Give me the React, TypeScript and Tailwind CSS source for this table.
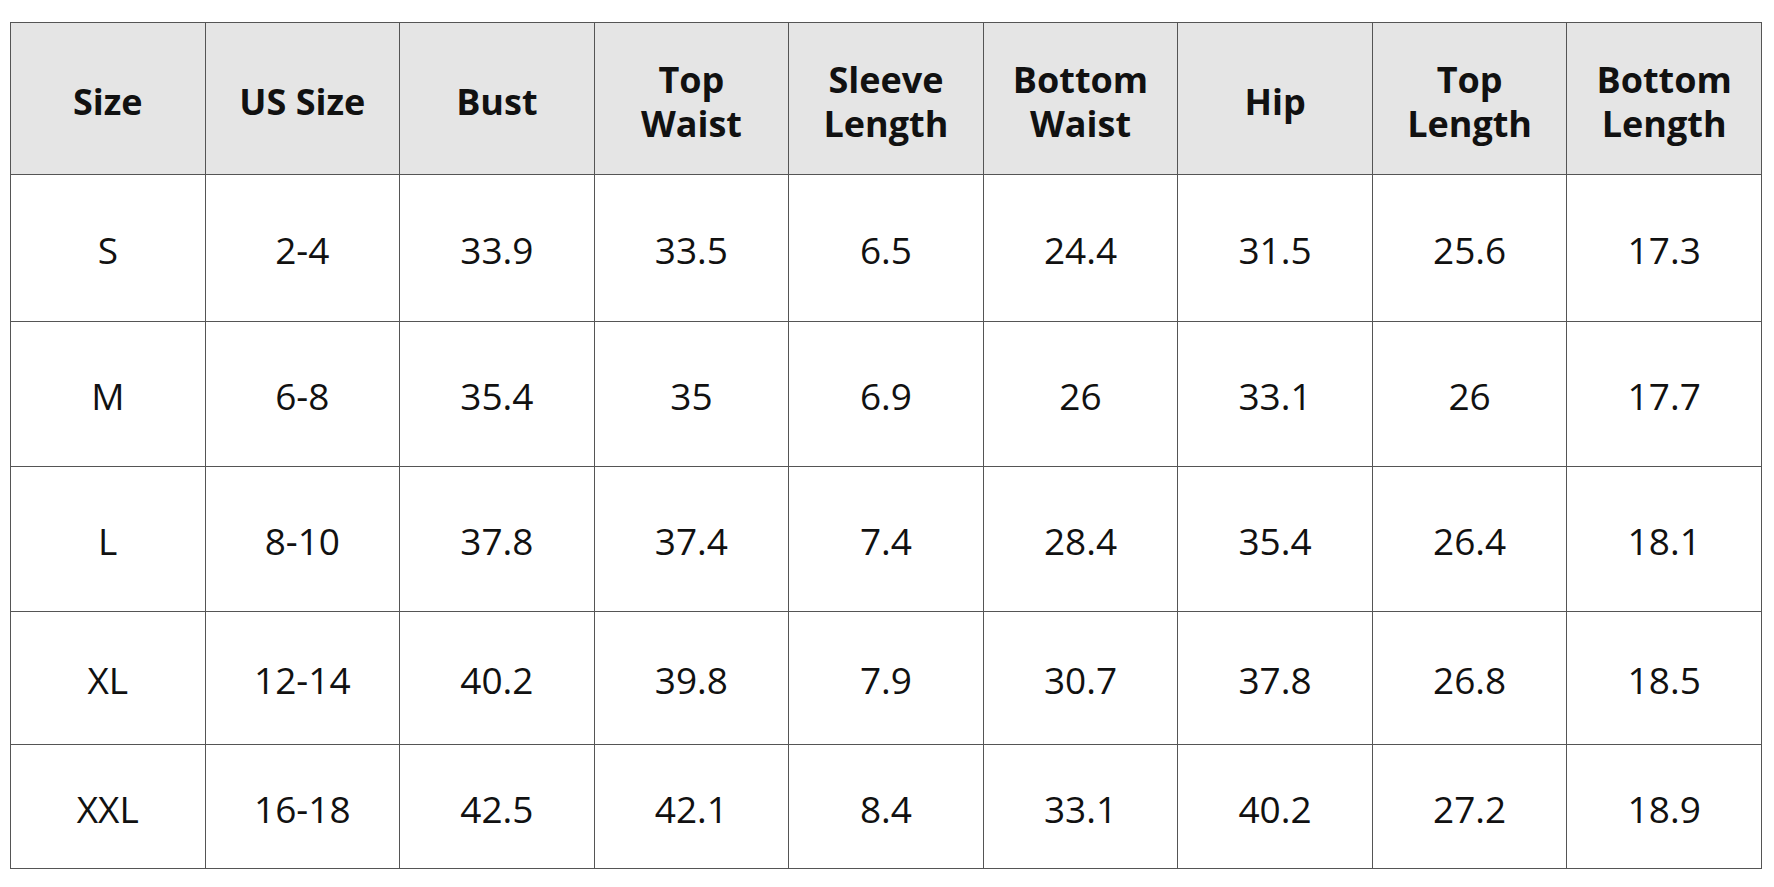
import React from "react";

const headers = [
  ["Size"],
  ["US Size"],
  ["Bust"],
  ["Top", "Waist"],
  ["Sleeve", "Length"],
  ["Bottom", "Waist"],
  ["Hip"],
  ["Top", "Length"],
  ["Bottom", "Length"],
];

const rows: { h: string; cells: string[] }[] = [
  { h: "h-[147px]", cells: ["S", "2-4", "33.9", "33.5", "6.5", "24.4", "31.5", "25.6", "17.3"] },
  { h: "h-[145px]", cells: ["M", "6-8", "35.4", "35", "6.9", "26", "33.1", "26", "17.7"] },
  { h: "h-[145px]", cells: ["L", "8-10", "37.8", "37.4", "7.4", "28.4", "35.4", "26.4", "18.1"] },
  { h: "h-[133px]", cells: ["XL", "12-14", "40.2", "39.8", "7.9", "30.7", "37.8", "26.8", "18.5"] },
  { h: "h-[124px]", cells: ["XXL", "16-18", "42.5", "42.1", "8.4", "33.1", "40.2", "27.2", "18.9"] },
];

export default function App() {
  return (
    <div className="min-h-[887px] bg-white pl-[10px] pt-[22px] font-['Open_Sans',sans-serif] text-[#111]">
      <table className="w-[1752px] table-fixed border-collapse">
        <thead>
          <tr className="h-[152px] bg-[#e5e5e5]">
            {headers.map((lines, i) => (
              <th
                key={i}
                className="border border-[#555] pt-[6px] text-[36px] font-bold leading-[44px] text-center align-middle"
              >
                {lines.map((l) => (
                  <div key={l}>{l}</div>
                ))}
              </th>
            ))}
          </tr>
        </thead>
        <tbody>
          {rows.map((r) => (
            <tr key={r.cells[0]} className={r.h}>
              {r.cells.map((c, i) => (
                <td key={i} className="border border-[#555] pt-[4px] text-center align-middle text-[37px]">
                  {c}
                </td>
              ))}
            </tr>
          ))}
        </tbody>
      </table>
    </div>
  );
}
